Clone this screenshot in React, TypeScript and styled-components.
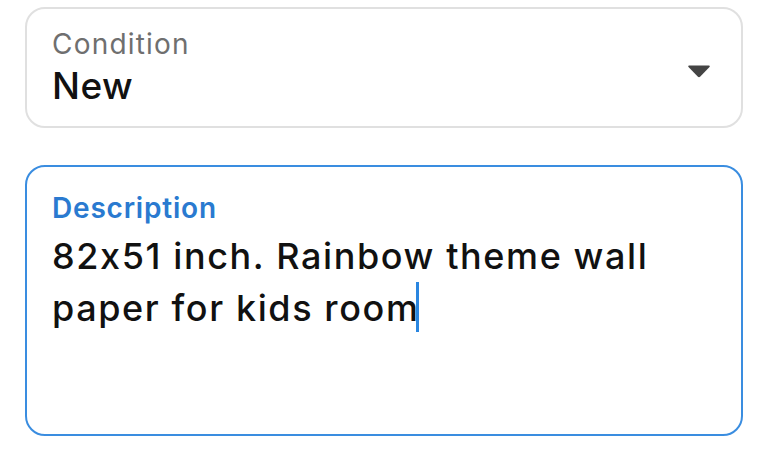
import React from "react";
import styled, { createGlobalStyle } from "styled-components";

const Global = createGlobalStyle`
  html, body { margin: 0; padding: 0; background: #fff; }
  body {
    font-family: Inter, "Liberation Sans", Arial, sans-serif;
    font-feature-settings: "calt" 0;
    -webkit-font-smoothing: antialiased;
  }
`;

const Page = styled.div`
  display: flex;
  flex-direction: column;
  gap: 37px;
  padding: 7px 25px 0 25px;
  width: 768px;
  height: 469px;
  box-sizing: border-box;
`;

const Field = styled.div<{ $focused?: boolean; $tall?: boolean }>`
  box-sizing: border-box;
  border: 2px solid ${(p) => (p.$focused ? "#3a8de0" : "#e0e0e0")};
  border-radius: 20px;
  height: ${(p) => (p.$tall ? "271px" : "121px")};
  padding: ${(p) => (p.$tall ? "25px 25px" : "24px 25px")};
  display: flex;
  align-items: ${(p) => (p.$tall ? "flex-start" : "center")};
  justify-content: space-between;
`;

const Stack = styled.div`
  display: flex;
  flex-direction: column;
`;

const Label = styled.div<{ $focused?: boolean }>`
  font-size: 28px;
  line-height: 32px;
  font-weight: ${(p) => (p.$focused ? 600 : 400)};
  letter-spacing: ${(p) => (p.$focused ? "0.8px" : "1.2px")};
  color: ${(p) => (p.$focused ? "#2a7ad0" : "#6f6f6f")};
`;

const Value = styled.div`
  font-size: 37px;
  line-height: 42px;
  font-weight: 500;
  letter-spacing: 0.4px;
  color: #111;
  margin-top: 5px;
`;

const Body = styled.div`
  font-size: 36px;
  line-height: 52px;
  font-weight: 500;
  letter-spacing: 1.6px;
  color: #111;
  margin-top: 6px;
  width: 690px;
`;

const Caret = styled.span`
  display: inline-block;
  width: 3px;
  height: 50px;
  background: #2a86e0;
  vertical-align: -11px;
  margin-left: -3px;
`;

const Arrow = styled.svg`
  width: 24px;
  height: 14px;
  margin-right: 5px;
  margin-top: 6px;
`;

export default function App() {
  return (
    <>
      <Global />
      <Page>
        <Field>
          <Stack>
            <Label>Condition</Label>
            <Value>New</Value>
          </Stack>
          <Arrow viewBox="0 0 24 14">
            <path d="M2 1.5 H22 Q23.5 1.5 22.5 3 L13.3 12.5 Q12 13.8 10.7 12.5 L1.5 3 Q0.5 1.5 2 1.5 Z" fill="#444" />
          </Arrow>
        </Field>
        <Field $focused $tall>
          <Stack>
            <Label $focused>Description</Label>
            <Body>
              82x51 inch. Rainbow theme wall paper for kids room
              <Caret />
            </Body>
          </Stack>
        </Field>
      </Page>
    </>
  );
}
